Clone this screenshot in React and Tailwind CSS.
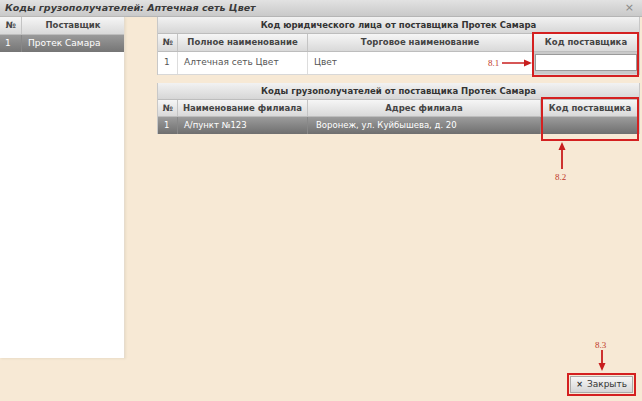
const font = { fontFamily: '"DejaVu Sans", Verdana, sans-serif' };
const serif = { fontFamily: '"Liberation Serif", serif' };

function HeadCell({ children, className = "" }) {
  return (
    <div
      className={
        "flex items-center justify-center border-r border-[#c4c4c4] bg-gradient-to-b from-[#f6f6f6] to-[#d9d9d9] text-[8.5px] font-bold text-[#444] " +
        className
      }
    >
      {children}
    </div>
  );
}

function Caption({ children }) {
  return (
    <div className="h-[17px] flex items-center justify-center border-b border-[#bdbdbd] bg-gradient-to-b from-[#f2f2f2] to-[#d6d6d6] text-[8.5px] font-bold text-[#333]">
      {children}
    </div>
  );
}

export default function App() {
  return (
    <div
      className="relative w-[642px] h-[401px] overflow-hidden bg-[#f7e9d5] flex flex-col"
      style={font}
    >
      {/* Title */}
      <div className="h-[17px] flex items-center justify-between px-[5px] bg-gradient-to-b from-[#e2e2e2] to-[#c9c9c9] border-b border-[#b5b5b5]">
        <span className="text-[9.5px] font-bold italic text-[#3a3a3a]">
          Коды грузополучателей: Аптечная сеть Цвет
        </span>
        <span className="text-[11px] text-[#888] pr-[3px]">×</span>
      </div>

      <div className="flex">
        {/* Left: suppliers */}
        <div className="w-[125px] h-[341px] bg-white border-r border-[#e6dccd] shadow-[1px_1px_2px_#eadcc6]">
          <div className="flex h-[18px] border-b border-[#bdbdbd]">
            <HeadCell className="w-[22px]">№</HeadCell>
            <HeadCell className="flex-1 border-r-0">Поставщик</HeadCell>
          </div>
          <div className="flex h-[17px] bg-gradient-to-b from-[#9a9a9a] to-[#757575] text-white text-[9px]">
            <div className="w-[22px] pl-[5px] flex items-center border-r border-[#888]">1</div>
            <div className="flex-1 pl-[6px] flex items-center">Протек Самара</div>
          </div>
        </div>

        {/* Right: tables */}
        <div className="ml-[32px] w-[483px] flex flex-col">
          {/* Table 1 */}
          <div className="border-l border-r border-[#c8c8c8] bg-white">
            <Caption>Код юридического лица от поставщика Протек Самара</Caption>
            <div className="flex h-[18px] border-b border-[#bdbdbd]">
              <HeadCell className="w-[20px]">№</HeadCell>
              <HeadCell className="w-[130px]">Полное наименование</HeadCell>
              <HeadCell className="w-[225px]">Торговое наименование</HeadCell>
              <HeadCell className="flex-1 border-r-0">Код поставщика</HeadCell>
            </div>
            <div className="flex h-[23px] text-[9px] text-[#555] border-b border-[#d8d8d8]">
              <div className="w-[20px] pl-[6px] flex items-center border-r border-[#ddd]">1</div>
              <div className="w-[130px] pl-[6px] flex items-center border-r border-[#ddd]">Алтечная сеть Цвет</div>
              <div className="w-[225px] pl-[6px] flex items-center border-r border-[#ddd]">Цвет</div>
              <div className="flex-1 bg-[#c9c9c9] pt-[2px] px-[2px]">
                <div className="h-[17px] bg-white border border-[#9a9a9a]" />
              </div>
            </div>
          </div>

          {/* Table 2 */}
          <div className="mt-[8px] border-l border-r border-[#c8c8c8]">
            <Caption>Коды грузополучателей от поставщика Протек Самара</Caption>
            <div className="flex h-[17px] border-b border-[#bdbdbd]">
              <HeadCell className="w-[20px]">№</HeadCell>
              <HeadCell className="w-[130px]">Наименование филиала</HeadCell>
              <HeadCell className="w-[233px]">Адрес филиала</HeadCell>
              <HeadCell className="flex-1 border-r-0">Код поставщика</HeadCell>
            </div>
            <div className="flex h-[17px] text-[8.5px] text-white bg-gradient-to-b from-[#9c9c9c] to-[#6f6f6f]">
              <div className="w-[20px] pl-[6px] flex items-center border-r border-[#888]">1</div>
              <div className="w-[130px] pl-[6px] flex items-center border-r border-[#888]">А/пункт №123</div>
              <div className="w-[233px] pl-[8px] flex items-center border-r border-[#888]">Воронеж, ул. Куйбышева, д. 20</div>
              <div className="flex-1" />
            </div>
          </div>
        </div>
      </div>

      {/* Footer button */}
      <div className="flex justify-end pr-[6px] mt-[15px]">
        <div className="border-2 border-[#d42020] p-[1px]">
          <button className="h-[17px] px-[5px] flex items-center gap-[4px] bg-gradient-to-b from-[#f6f6f6] to-[#d6d6d6] border border-[#aaa] text-[9px] text-[#333]">
            <span className="text-[8px] font-bold">×</span>
            Закрыть
          </button>
        </div>
      </div>

      {/* Annotations */}
      <div className="absolute left-[532px] top-[32px] w-[107px] h-[45px] border-2 border-[#d42020]" />
      <div className="absolute left-[541px] top-[97px] w-[98px] h-[44px] border-2 border-[#d42020]" />

      <span className="absolute left-[488px] top-[57px] text-[9px] text-[#c0392b]" style={serif}>8.1</span>
      <svg className="absolute left-[502px] top-[59px]" width="30" height="8" viewBox="0 0 30 8">
        <line x1="0" y1="4" x2="24" y2="4" stroke="#c81e1e" strokeWidth="1.5" />
        <polygon points="22,0.5 30,4 22,7.5" fill="#c81e1e" />
      </svg>

      <svg className="absolute left-[558px] top-[142px]" width="8" height="27" viewBox="0 0 8 27">
        <line x1="4" y1="6" x2="4" y2="27" stroke="#c81e1e" strokeWidth="1.8" />
        <polygon points="0.5,8 4,0 7.5,8" fill="#c81e1e" />
      </svg>
      <span className="absolute left-[555px] top-[171px] text-[9px] text-[#c0392b]" style={serif}>8.2</span>

      <span className="absolute left-[595px] top-[339px] text-[9px] text-[#c0392b]" style={serif}>8.3</span>
      <svg className="absolute left-[598px] top-[350px]" width="8" height="21" viewBox="0 0 8 21">
        <line x1="4" y1="0" x2="4" y2="15" stroke="#c81e1e" strokeWidth="1.8" />
        <polygon points="0.5,13 4,21 7.5,13" fill="#c81e1e" />
      </svg>
    </div>
  );
}
